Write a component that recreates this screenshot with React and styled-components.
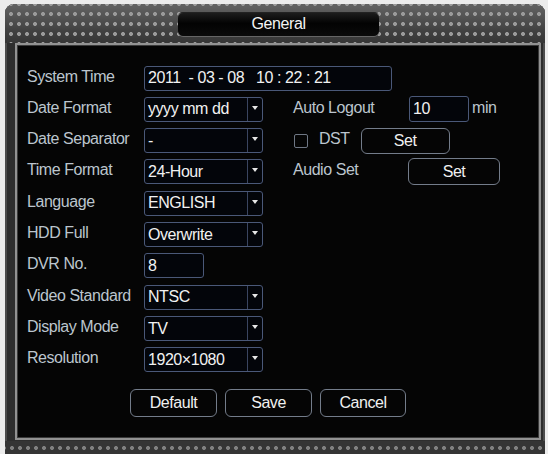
import React from "react";
import styled, { createGlobalStyle } from "styled-components";

const GlobalStyle = createGlobalStyle`
  html, body { margin: 0; padding: 0; background: #ececec; }
  body { font-family: "Liberation Sans", Arial, sans-serif; overflow: hidden; }
  * { box-sizing: border-box; }
`;

const dot = (c) =>
  `radial-gradient(circle at 50% 50%, ${c} 0 1.6px, transparent 2.3px)`;

const Frame = styled.div`
  width: 540px;
  height: 470px;
  margin: 4px 0 0 5px;
  border-radius: 9px 9px 0 0;
  background: #2e2e2e;
  box-shadow: inset 0 1px 0 #777, inset 2px 0 0 #4c4c4c, inset -2px 0 0 #4c4c4c;
  display: flex;
  flex-direction: column;
`;

const Header = styled.div`
  height: 39px;
  display: flex;
  align-items: center;
  justify-content: center;
  padding-left: 7px;
  border-radius: 9px 9px 0 0;
  background: ${dot("#9a9a9a")} 2px 5px / 8px 10px,
    linear-gradient(#636363 0%, #525252 35%, #404040 70%, #363636 100%);
`;

const TitleTab = styled.div`
  width: 201px;
  height: 23px;
  margin-top: 1px;
  border-radius: 5px;
  background: linear-gradient(#1c1c1c, #030303 45%, #0a0a0a);
  box-shadow: 0 1px 0 #666, 0 -1px 0 #222;
  display: flex;
  align-items: center;
  justify-content: center;
  color: #f4f4f4;
  font-size: 16px;
  letter-spacing: -0.4px;
`;

const Panel = styled.div`
  height: 397px;
  margin: 0 4px 0 10px;
  border: 2px solid #929292;
  box-shadow: inset 0 0 0 1px #3a3a3a;
  background: #050505;
  padding: 20px 0 0 10px;
`;

const Footer = styled.div`
  height: 14px;
  margin-top: 1px;
  background: ${dot("#808080")} 3px 2px / 8px 10px repeat-x, #353535;
`;

const Form = styled.div`
  display: grid;
  grid-template-columns: 117px 149px 116px 1fr;
  grid-template-rows: repeat(10, 26px);
  row-gap: 5.33px;
  align-items: center;
`;

const Label = styled.div`
  grid-column: ${(p) => p.col || 1};
  color: #bcc5ce;
  font-size: 16px;
  letter-spacing: -0.45px;
  white-space: nowrap;
  line-height: 1;
  margin-top: -3px;
`;

const Box = styled.div`
  height: ${(p) => p.h || 25}px;
  width: ${(p) => p.w}px;
  border: 1.5px solid #4a5878;
  border-radius: 3px;
  background: #03050a;
  color: #f1f1f1;
  font-size: 16px;
  letter-spacing: -0.45px;
  display: flex;
  align-items: center;
  padding-left: 3px;
  white-space: pre;
  overflow: hidden;
`;

const TimeBox = styled(Box)`
  grid-column: 2 / 4;
`;

const Value = styled.span`
  flex: 1;
`;

const Arrow = styled.span`
  width: 15px;
  align-self: stretch;
  border-left: 1.5px solid #3a4560;
  display: flex;
  justify-content: center;
  padding-top: 8px;
  &::before {
    content: "";
    border-left: 3px solid transparent;
    border-right: 3px solid transparent;
    border-top: 4px solid #e6e6e6;
    height: 0;
  }
`;

const Cell = styled.div`
  grid-column: ${(p) => p.col};
  display: flex;
  align-items: center;
  gap: ${(p) => p.gap || 0}px;
`;

const Unit = styled.span`
  color: #bcc5ce;
  font-size: 16px;
  letter-spacing: -0.45px;
  margin-left: ${(p) => (p.flush ? 0 : 3)}px;
  margin-top: -3px;
`;

const Check = styled.span`
  width: 14px;
  height: 14px;
  margin-left: 1px;
  border: 1.5px solid #6f7784;
  border-radius: 2px;
`;

const Button = styled.div`
  width: ${(p) => p.w}px;
  height: ${(p) => p.h || 26}px;
  border: 1.5px solid #737c8a;
  border-radius: 6px;
  background: #050505;
  color: #f0f0f0;
  font-size: 16px;
  letter-spacing: -0.45px;
  display: flex;
  align-items: center;
  justify-content: center;
  margin-left: ${(p) => p.ml || 0}px;
`;

const ButtonRow = styled.div`
  display: flex;
  gap: 8px;
  margin: 16px 0 0 103px;
`;

function Select({ value }) {
  return (
    <Box w={119}>
      <Value>{value}</Value>
      <Arrow />
    </Box>
  );
}

const selects = [
  ["Language", "ENGLISH"],
  ["HDD Full", "Overwrite"],
];

const selects2 = [
  ["Video Standard", "NTSC"],
  ["Display Mode", "TV"],
  ["Resolution", "1920\u00d71080"],
];

export default function App() {
  return (
    <>
      <GlobalStyle />
      <Frame>
        <Header>
          <TitleTab>General</TitleTab>
        </Header>
        <Panel>
          <Form>
            <Label>System Time</Label>
            <TimeBox w={248}>{"2011  - 03 - 08   10 : 22 : 21"}</TimeBox>

            <Label>Date Format</Label>
            <Select value="yyyy mm dd" />
            <Label col={3}>Auto Logout</Label>
            <Cell col={4}>
              <Box w={60} h={26}>10</Box>
              <Unit>min</Unit>
            </Cell>

            <Label>Date Separator</Label>
            <Select value="-" />
            <Cell col="3 / 5" gap={11}>
              <Check />
              <Unit flush>DST</Unit>
              <Button w={89}>Set</Button>
            </Cell>

            <Label>Time Format</Label>
            <Select value="24-Hour" />
            <Label col={3}>Audio Set</Label>
            <Cell col={4}>
              <Button w={92} h={27} ml={-1}>Set</Button>
            </Cell>

            {selects.map(([l, v]) => (
              <React.Fragment key={l}>
                <Label>{l}</Label>
                <Select value={v} />
              </React.Fragment>
            ))}

            <Label>DVR No.</Label>
            <Box w={60}>8</Box>

            {selects2.map(([l, v]) => (
              <React.Fragment key={l}>
                <Label>{l}</Label>
                <Select value={v} />
              </React.Fragment>
            ))}
          </Form>
          <ButtonRow>
            <Button w={87} h={28}>Default</Button>
            <Button w={87} h={28}>Save</Button>
            <Button w={86} h={28}>Cancel</Button>
          </ButtonRow>
        </Panel>
        <Footer />
      </Frame>
    </>
  );
}
